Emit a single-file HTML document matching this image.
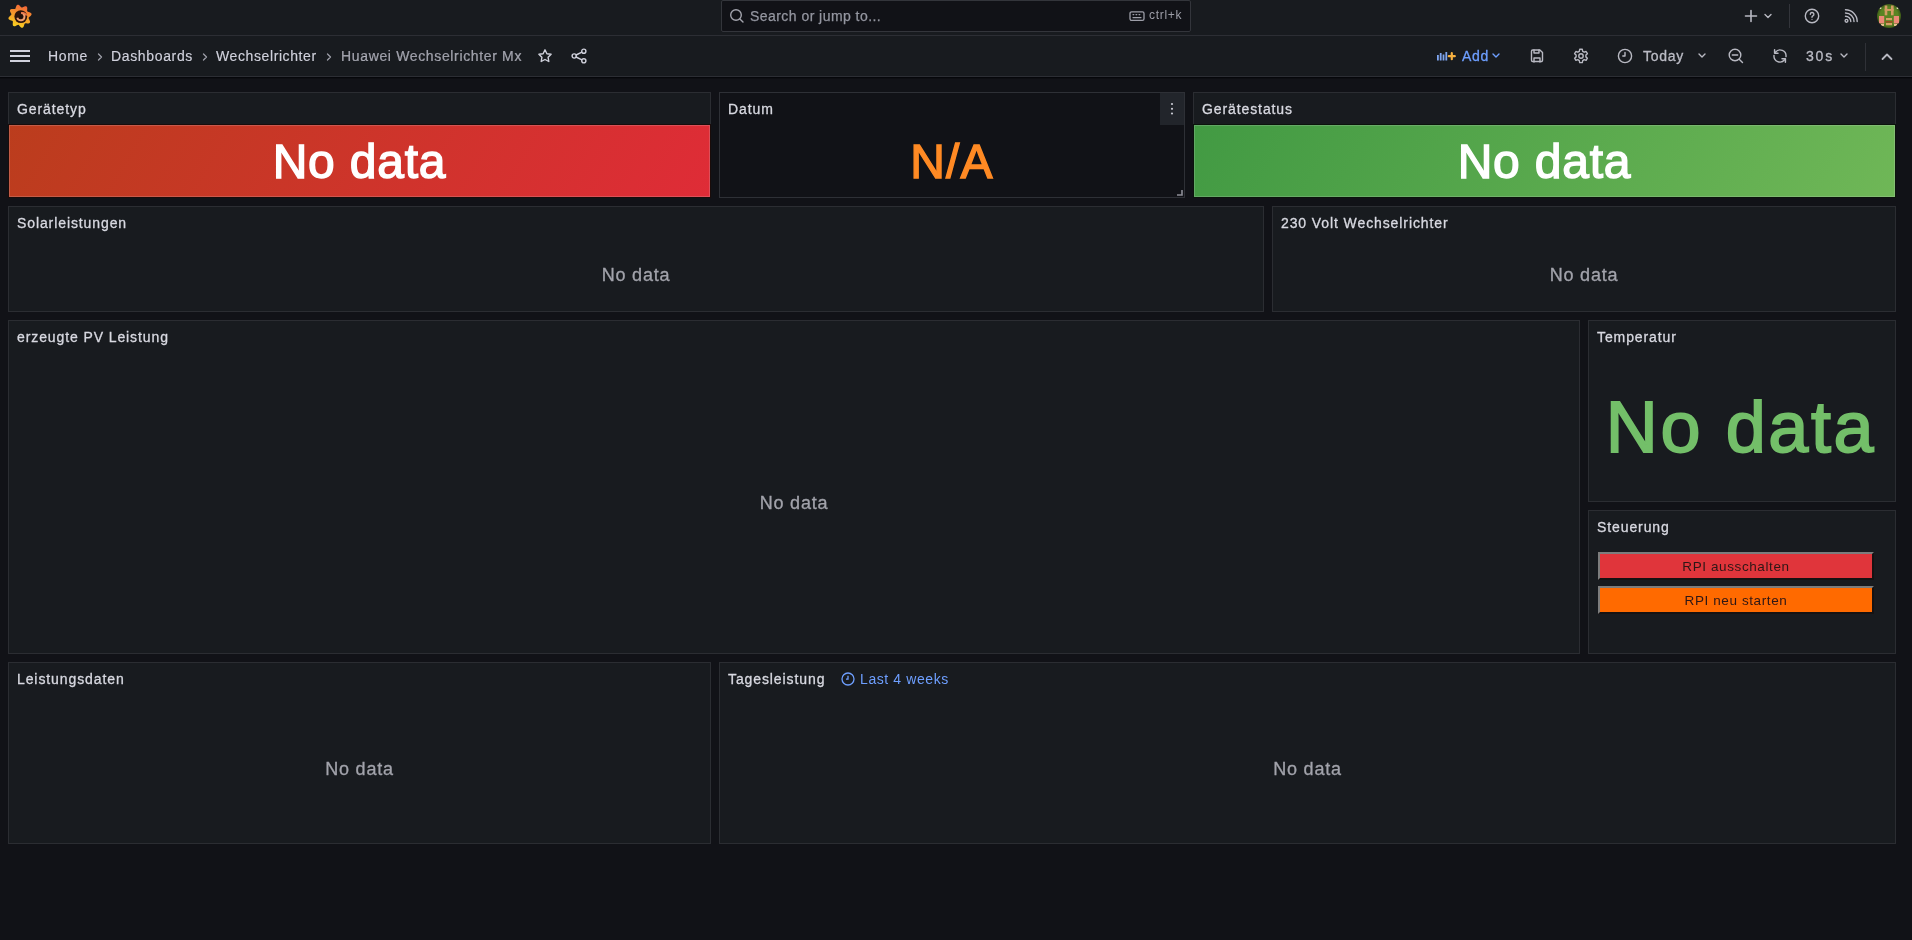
<!DOCTYPE html>
<html><head><meta charset="utf-8">
<style>
*{box-sizing:border-box;margin:0;padding:0}
html,body{width:1912px;height:940px;overflow:hidden;background:#111217;font-family:"Liberation Sans",sans-serif;color:#ccccdc}
.abs{position:absolute}
.t{position:absolute;white-space:nowrap;line-height:1}
#top{position:absolute;left:0;top:0;width:1912px;height:36px;background:#181b1f;border-bottom:1px solid #2c2e34}
#bar{position:absolute;left:0;top:36px;width:1912px;height:41px;background:#181b1f;border-bottom:1px solid #2c2e34}
.panel{position:absolute;background:#181b1f;border:1px solid #2b2d32}
.ptitle{position:absolute;left:8px;top:0;font-size:14px;font-weight:400;color:#d8d9e1;-webkit-text-stroke:0.3px #d8d9e1;white-space:nowrap;line-height:32px;letter-spacing:0.9px}
.nd{position:absolute;left:0;width:100%;text-align:center;font-size:18px;color:#a2a3ab;white-space:nowrap;line-height:1;letter-spacing:0.8px;-webkit-text-stroke:0.3px #a2a3ab}
.big{position:absolute;left:0;width:100%;text-align:center;white-space:nowrap;line-height:1}
svg{position:absolute;overflow:visible}
.t,.ptitle,.nd,.big,.btn{will-change:transform}
.ic{fill:none;stroke:#b8b9c2;stroke-width:1.5;stroke-linecap:round;stroke-linejoin:round}
.bc{font-size:14px;letter-spacing:0.65px;color:#d0d1dc;-webkit-text-stroke:0.15px #d0d1dc}
.btn{position:absolute;left:9px;width:276px;height:28px;border-style:solid;border-width:2px;border-color:#7d7d7d #161212 #161212 #7d7d7d;font-size:13.5px;letter-spacing:0.6px;color:#2e1716;text-align:center;line-height:25px}
</style></head><body>

<!-- TOP BAR -->
<div id="top"></div>
<div id="bar"></div>
<div class="abs" style="left:0;top:77px;width:1912px;height:1px;background:#06070b"></div><div class="abs" style="left:0;top:78px;width:1912px;height:1px;background:#0d0e12"></div>

<!-- logo -->
<svg style="left:8px;top:4px" width="24" height="24" viewBox="0 0 24 24">
  <defs><linearGradient id="lg" x1="0.7" y1="0" x2="0.35" y2="1"><stop offset="0" stop-color="#f0603a"/><stop offset="0.5" stop-color="#f59a2a"/><stop offset="1" stop-color="#f8d420"/></linearGradient></defs>
  <path d="M22.26 12.20 L21.49 12.82 L20.90 13.37 L20.63 13.92 L20.72 14.54 L21.08 15.28 L21.56 16.16 L21.94 17.10 L22.06 18.01 L21.81 18.76 L21.18 19.25 L20.28 19.46 L19.25 19.45 L18.27 19.35 L17.47 19.32 L16.89 19.52 L16.51 20.01 L16.24 20.80 L15.96 21.76 L15.56 22.70 L15.01 23.42 L14.30 23.77 L13.51 23.68 L12.72 23.19 L12.00 22.46 L11.38 21.69 L10.83 21.10 L10.28 20.83 L9.66 20.92 L8.92 21.28 L8.04 21.76 L7.10 22.14 L6.19 22.26 L5.44 22.01 L4.95 21.38 L4.74 20.48 L4.75 19.45 L4.85 18.47 L4.88 17.67 L4.68 17.09 L4.19 16.71 L3.40 16.44 L2.44 16.16 L1.50 15.76 L0.78 15.21 L0.43 14.50 L0.52 13.71 L1.01 12.92 L1.74 12.20 L2.51 11.58 L3.10 11.03 L3.37 10.48 L3.28 9.86 L2.92 9.12 L2.44 8.24 L2.06 7.30 L1.94 6.39 L2.19 5.64 L2.82 5.15 L3.72 4.94 L4.75 4.95 L5.73 5.05 L6.53 5.08 L7.11 4.88 L7.49 4.39 L7.76 3.60 L8.04 2.64 L8.44 1.70 L8.99 0.98 L9.70 0.63 L10.49 0.72 L11.28 1.21 L12.00 1.94 L12.62 2.71 L13.17 3.30 L13.72 3.57 L14.34 3.48 L15.08 3.12 L15.96 2.64 L16.90 2.26 L17.81 2.14 L18.56 2.39 L19.05 3.02 L19.26 3.92 L19.25 4.95 L19.15 5.93 L19.12 6.73 L19.32 7.31 L19.81 7.69 L20.60 7.96 L21.56 8.24 L22.50 8.64 L23.22 9.19 L23.57 9.90 L23.48 10.69 L22.99 11.48Z" fill="url(#lg)"/>
  <circle cx="12.8" cy="12.6" r="6.4" fill="#2b140c"/>
  <path d="M13.2 8.9 A3.7 3.7 0 1 1 9.3 13.8" fill="none" stroke="#f0a070" stroke-width="1.9"/>
  <path d="M13.2 8.9 A5.2 5.2 0 0 1 18.6 11.5" fill="none" stroke="#e8764a" stroke-width="1.6"/>
  <circle cx="13" cy="12.8" r="1.7" fill="#1c0f0a"/>
</svg>
<!-- search -->
<div class="abs" style="left:721px;top:0;width:470px;height:32px;background:#111217;border:1px solid #33353b;border-radius:2px"></div>
<svg style="left:729px;top:8px" width="16" height="16" viewBox="0 0 16 16"><circle cx="7" cy="7" r="5.3" class="ic" style="stroke:#a3a4ad;stroke-width:1.4"/><path d="M10.9 10.9 L14 14" class="ic" style="stroke:#a3a4ad;stroke-width:1.4"/></svg>
<div class="t" style="left:750px;top:9px;font-size:14px;color:#9496a0;letter-spacing:0.45px;-webkit-text-stroke:0.25px #9496a0">Search or jump to...</div>
<svg style="left:1129px;top:10px" width="16" height="12" viewBox="0 0 16 12"><rect x="1" y="1.8" width="14" height="8.6" rx="1.6" class="ic" style="stroke:#9d9ea8;stroke-width:1.3"/><path d="M4 4.6h0.8M7 4.6h0.8M10 4.6h0.8M4 7.6h8" class="ic" style="stroke:#9d9ea8;stroke-width:1.2"/></svg>
<div class="t" style="left:1149px;top:9px;font-size:12px;color:#9d9ea8;letter-spacing:0.7px">ctrl+k</div>

<!-- right top icons -->
<svg style="left:1743px;top:8px" width="16" height="16" viewBox="0 0 16 16"><path d="M8 2.5v11M2.5 8h11" class="ic" style="stroke-width:1.6"/></svg>
<svg style="left:1763px;top:12px" width="10" height="8" viewBox="0 0 10 8"><path d="M2 2.5l3 3 3-3" class="ic" style="stroke-width:1.4"/></svg>
<div class="abs" style="left:1789px;top:4px;width:1px;height:24px;background:#33353b"></div>
<svg style="left:1804px;top:8px" width="16" height="16" viewBox="0 0 16 16"><circle cx="8" cy="8" r="6.7" class="ic" style="stroke-width:1.4"/><path d="M6.3 6.3a1.8 1.8 0 1 1 2.6 1.6c-.6.3-.9.7-.9 1.3" class="ic" style="stroke-width:1.4"/><circle cx="8" cy="11.3" r="0.6" fill="#b8b9c2"/></svg>
<svg style="left:1843px;top:8px" width="16" height="16" viewBox="0 0 16 16"><circle cx="3.5" cy="12.8" r="1.4" class="ic" style="stroke-width:1.4"/><path d="M2.5 8.2a5.3 5.3 0 0 1 5.3 5.3M2.5 5a8.5 8.5 0 0 1 8.5 8.5M2.5 1.8a11.7 11.7 0 0 1 11.7 11.7" class="ic" style="stroke-width:1.4"/></svg>
<!-- avatar -->
<svg style="left:1877px;top:4px" width="24" height="24" viewBox="0 0 24 24">
  <defs><clipPath id="av"><circle cx="12" cy="12" r="12"/></clipPath><radialGradient id="avg" cx="0.5" cy="0.5" r="0.5"><stop offset="0.75" stop-color="#5a8423"/><stop offset="1" stop-color="#3d5a18"/></radialGradient></defs>
  <g clip-path="url(#av)">
    <rect width="24" height="24" fill="url(#avg)"/>
    <rect x="7.7" y="1.5" width="2.6" height="9.8" fill="#d49c64"/>
    <rect x="14" y="1.5" width="2.6" height="9.8" fill="#d49c64"/>
    <rect x="7.7" y="5" width="8.9" height="1.9" fill="#d49c64"/>
    <rect x="2.5" y="3.2" width="1.8" height="1.8" fill="#e6dcb8"/>
    <rect x="19.7" y="3.2" width="1.8" height="1.8" fill="#e6dcb8"/>
    <rect x="2" y="12" width="5.2" height="7.5" fill="#ec8a78"/>
    <rect x="16.8" y="12" width="5.2" height="7.5" fill="#ec8a78"/>
    <rect x="9" y="14" width="6" height="2.2" fill="#d7a066"/>
    <rect x="8.5" y="17" width="7" height="1.6" fill="#9a5020"/>
    <rect x="9" y="19" width="6" height="2.2" fill="#d7a066"/>
    <rect x="4" y="20" width="3" height="2" fill="#e8c090"/>
    <rect x="17" y="20" width="3" height="2" fill="#e8c090"/>
  </g>
</svg>
<!-- second bar -->
<svg style="left:10px;top:50px" width="20" height="12" viewBox="0 0 20 12"><rect x="0" y="0" width="20" height="2" fill="#d0d1dc"/><rect x="0" y="5" width="20" height="2" fill="#d0d1dc"/><rect x="0" y="10" width="20" height="2" fill="#d0d1dc"/></svg>
<div class="t bc" style="left:48px;top:49px">Home</div>
<svg style="left:96px;top:52px" width="8" height="10" viewBox="0 0 8 10"><path d="M2.5 2l3 3-3 3" class="ic" style="stroke:#9d9ea8;stroke-width:1.3"/></svg>
<div class="t bc" style="left:111px;top:49px">Dashboards</div>
<svg style="left:201px;top:52px" width="8" height="10" viewBox="0 0 8 10"><path d="M2.5 2l3 3-3 3" class="ic" style="stroke:#9d9ea8;stroke-width:1.3"/></svg>
<div class="t bc" style="left:216px;top:49px;letter-spacing:0.6px">Wechselrichter</div>
<svg style="left:325px;top:52px" width="8" height="10" viewBox="0 0 8 10"><path d="M2.5 2l3 3-3 3" class="ic" style="stroke:#9d9ea8;stroke-width:1.3"/></svg>
<div class="t bc" style="left:341px;top:49px;color:#9b9ca6">Huawei Wechselrichter Mx</div>
<svg style="left:537px;top:48px" width="16" height="16" viewBox="0 0 16 16"><path d="M8 1.8l1.9 3.9 4.2.6-3 3 .7 4.2L8 11.5l-3.8 2 .7-4.2-3-3 4.2-.6z" class="ic" style="stroke:#d0d1dc;stroke-width:1.4"/></svg>
<svg style="left:571px;top:48px" width="16" height="16" viewBox="0 0 16 16"><circle cx="3.2" cy="8" r="2.1" class="ic" style="stroke:#d0d1dc;stroke-width:1.4"/><circle cx="12.8" cy="3.2" r="2.1" class="ic" style="stroke:#d0d1dc;stroke-width:1.4"/><circle cx="12.8" cy="12.8" r="2.1" class="ic" style="stroke:#d0d1dc;stroke-width:1.4"/><path d="M5.1 7l5.8-2.8M5.1 9l5.8 2.8" class="ic" style="stroke:#d0d1dc;stroke-width:1.4"/></svg>

<!-- right controls -->
<svg style="left:1436px;top:48px" width="20" height="16" viewBox="0 0 20 16">
  <rect x="1" y="7" width="1.8" height="5.5" fill="#7ea5f0"/><rect x="3.8" y="5" width="1.8" height="7.5" fill="#7ea5f0"/><rect x="6.6" y="6.5" width="1.8" height="6" fill="#7ea5f0"/><rect x="9.4" y="4" width="1.8" height="8.5" fill="#7ea5f0"/>
  <path d="M15.8 5.2v6M12.8 8.2h6" stroke="#f5b040" stroke-width="2.2" stroke-linecap="round"/>
</svg>
<div class="t" style="left:1462px;top:49px;font-size:14px;color:#6e9fff;letter-spacing:0.7px;-webkit-text-stroke:0.3px #6e9fff">Add</div>
<svg style="left:1491px;top:51px" width="10" height="8" viewBox="0 0 10 8"><path d="M2 3l3 3 3-3" class="ic" style="stroke:#6e9fff;stroke-width:1.4"/></svg>
<svg style="left:1529px;top:48px" width="16" height="16" viewBox="0 0 16 16"><path d="M2.5 3.2a1.2 1.2 0 0 1 1.2-1.2h7.2l2.6 2.6v7.7a1.2 1.2 0 0 1-1.2 1.2H3.7a1.2 1.2 0 0 1-1.2-1.2z" class="ic" style="stroke-width:1.4"/><path d="M5 2v3h5V2M5 14v-4h6v4" class="ic" style="stroke-width:1.4"/></svg>
<svg style="left:1573px;top:48px" width="16" height="16" viewBox="0 0 16 16"><path d="M6.7 1.3h2.6l.4 2 1.5.9 1.9-.7 1.3 2.2-1.5 1.3v1.9l1.5 1.3-1.3 2.2-1.9-.7-1.5.9-.4 2H6.7l-.4-2-1.5-.9-1.9.7-1.3-2.2 1.5-1.3V7l-1.5-1.3 1.3-2.2 1.9.7 1.5-.9z" class="ic" style="stroke-width:1.4"/><circle cx="8" cy="8" r="2.2" class="ic" style="stroke-width:1.4"/></svg>
<svg style="left:1617px;top:48px" width="16" height="16" viewBox="0 0 16 16"><circle cx="8" cy="8" r="6.6" class="ic" style="stroke-width:1.4"/><path d="M8 4.5V8H5.8" class="ic" style="stroke-width:1.4"/></svg>
<div class="t" style="left:1643px;top:49px;font-size:14px;color:#bbbcc5;letter-spacing:0.7px;-webkit-text-stroke:0.3px #bbbcc5">Today</div>
<svg style="left:1697px;top:51px" width="10" height="8" viewBox="0 0 10 8"><path d="M2 3l3 3 3-3" class="ic" style="stroke-width:1.4"/></svg>
<svg style="left:1728px;top:48px" width="16" height="16" viewBox="0 0 16 16"><circle cx="7" cy="7" r="5.8" class="ic" style="stroke-width:1.4"/><path d="M4.3 7h5.4M11.2 11.2L14.5 14.5" class="ic" style="stroke-width:1.4"/></svg>
<svg style="left:1772px;top:48px" width="16" height="16" viewBox="0 0 16 16"><path d="M14 8.6A6 6 0 0 0 3.4 4.2M2 7.4A6 6 0 0 0 12.6 11.8" class="ic" style="stroke-width:1.4"/><path d="M2.6 1.8v3.4h3.4M13.4 14.2v-3.4h-3.4" class="ic" style="stroke-width:1.5"/></svg>
<div class="t" style="left:1806px;top:49px;font-size:14px;color:#bbbcc5;letter-spacing:1.8px;-webkit-text-stroke:0.3px #bbbcc5">30s</div>
<svg style="left:1839px;top:51px" width="10" height="8" viewBox="0 0 10 8"><path d="M2 3l3 3 3-3" class="ic" style="stroke-width:1.4"/></svg>
<div class="abs" style="left:1865px;top:43px;width:1px;height:28px;background:#2f3137"></div>
<svg style="left:1879px;top:50px" width="16" height="12" viewBox="0 0 16 12"><path d="M3.5 9l4.5-4.5 4.5 4.5" class="ic" style="stroke-width:1.8"/></svg>

<!-- PANELS -->
<div class="panel" style="left:8px;top:92px;width:703px;height:106px">
  <div class="ptitle">Gerätetyp</div>
  <div class="abs" style="left:0;top:32px;width:701px;height:72px;background:linear-gradient(120deg,#bb3d1d,#df2c37);box-shadow:inset 0 0 0 1px rgba(220,220,235,0.2),0 0 0 1px #1a0c0a"></div>
  <div class="big" style="top:45px;font-size:48px;color:#fff;letter-spacing:0.8px;-webkit-text-stroke:1.4px #fff">No data</div>
</div>
<div class="panel" style="left:719px;top:92px;width:466px;height:106px;background:#111217;border-color:#2e3036">
  <div class="ptitle">Datum</div>
  <div class="abs" style="left:440px;top:0;width:24px;height:32px;background:#22252b"></div>
  <svg style="left:451px;top:9px" width="2" height="12" viewBox="0 0 2 12"><circle cx="1" cy="2" r="1.1" fill="#c8c9d2"/><circle cx="1" cy="6.8" r="1.1" fill="#c8c9d2"/><circle cx="1" cy="11.5" r="1.1" fill="#c8c9d2"/></svg>
  <div class="big" style="top:45px;font-size:48px;color:#ff8a24;letter-spacing:1.2px;-webkit-text-stroke:1.4px #ff8a24">N/A</div>
  <svg style="left:457px;top:97px" width="6" height="6" viewBox="0 0 6 6"><path d="M0 5h5V0" fill="none" stroke="#8e8f98" stroke-width="1.6"/></svg>
</div>
<div class="panel" style="left:1193px;top:92px;width:703px;height:106px">
  <div class="ptitle">Gerätestatus</div>
  <div class="abs" style="left:0;top:32px;width:701px;height:72px;background:linear-gradient(120deg,#429a43,#6fb757);box-shadow:inset 0 0 0 1px rgba(220,220,235,0.2),0 0 0 1px #0b140b"></div>
  <div class="big" style="top:45px;font-size:48px;color:#fff;letter-spacing:0.8px;-webkit-text-stroke:1.4px #fff">No data</div>
</div>

<div class="panel" style="left:8px;top:206px;width:1256px;height:106px">
  <div class="ptitle">Solarleistungen</div>
  <div class="nd" style="top:59px">No data</div>
</div>
<div class="panel" style="left:1272px;top:206px;width:624px;height:106px">
  <div class="ptitle">230 Volt Wechselrichter</div>
  <div class="nd" style="top:59px">No data</div>
</div>

<div class="panel" style="left:8px;top:320px;width:1572px;height:334px">
  <div class="ptitle">erzeugte PV Leistung</div>
  <div class="nd" style="top:173px">No data</div>
</div>
<div class="panel" style="left:1588px;top:320px;width:308px;height:182px">
  <div class="ptitle">Temperatur</div>
  <div class="big" style="top:70px;left:-1px;font-size:72px;color:#73bf69;letter-spacing:2.6px;-webkit-text-stroke:1.8px #73bf69">No data</div>
</div>
<div class="panel" style="left:1588px;top:510px;width:308px;height:144px">
  <div class="ptitle">Steuerung</div>
  <div class="btn" style="top:41px;background:#e0353b">RPI ausschalten</div>
  <div class="btn" style="top:75px;background:#ff6a00">RPI neu starten</div>
</div>

<div class="panel" style="left:8px;top:662px;width:703px;height:182px">
  <div class="ptitle">Leistungsdaten</div>
  <div class="nd" style="top:97px">No data</div>
</div>
<div class="panel" style="left:719px;top:662px;width:1177px;height:182px">
  <div class="ptitle">Tagesleistung</div>
  <svg style="left:121px;top:9px" width="14" height="14" viewBox="0 0 14 14"><circle cx="7" cy="7" r="6" fill="none" stroke="#6e9fff" stroke-width="1.3"/><path d="M7 3.8V7.2H5" fill="none" stroke="#6e9fff" stroke-width="1.3"/></svg>
  <div class="t" style="left:140px;top:9px;font-size:14px;color:#6e9fff;letter-spacing:0.6px">Last 4 weeks</div>
  <div class="nd" style="top:97px">No data</div>
</div>

</body></html>
